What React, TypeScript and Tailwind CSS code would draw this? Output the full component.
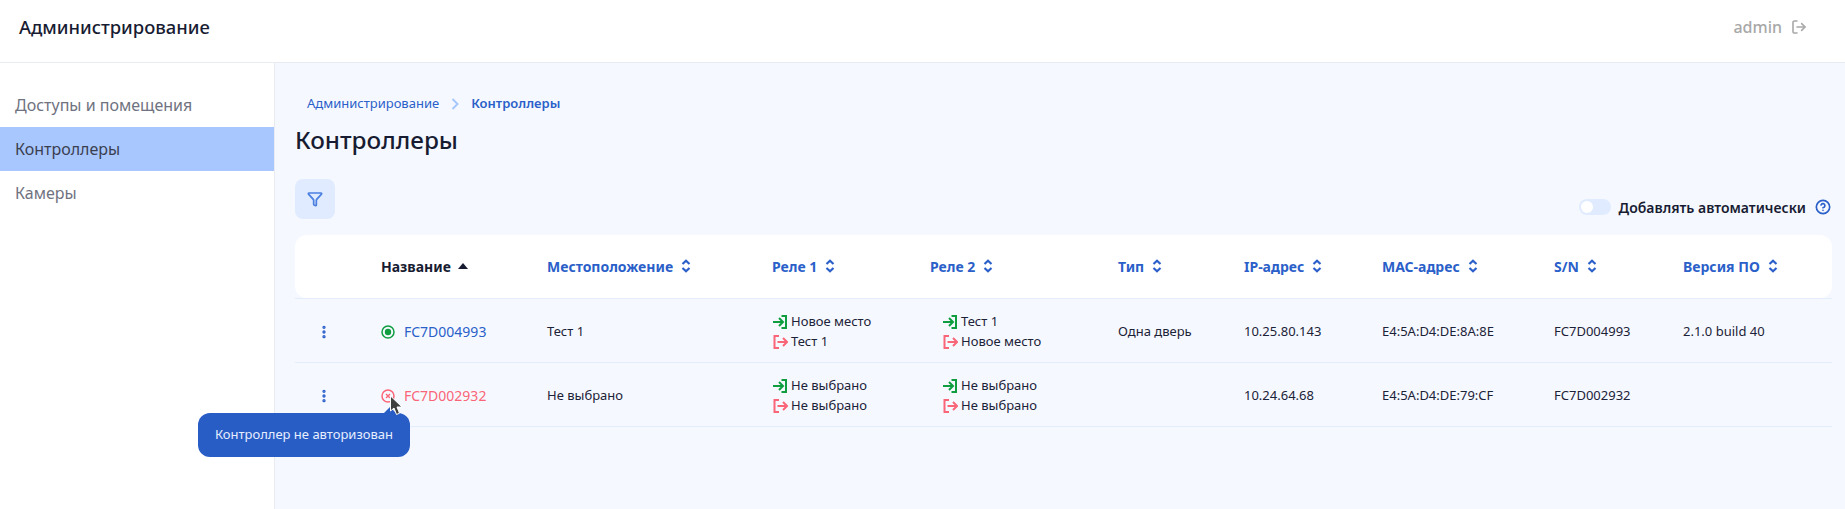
import { CircleHelp, EllipsisVertical, Filter, LogOut } from 'lucide-react';

const FONT = "font-['Noto_Sans',sans-serif]";

function SortIcon() {
  return (
    <svg width="10" height="14" viewBox="0 0 10 14" fill="none" stroke="currentColor" strokeWidth="2.2" className="ml-[8px] shrink-0">
      <path d="M1.5 5 L5 1.8 L8.5 5" />
      <path d="M1.5 9 L5 12.2 L8.5 9" />
    </svg>
  );
}

function HeaderCell({ label }: { label: string }) {
  return (
    <th className="p-0 bg-white text-left text-[14px] font-bold text-[#2b5fc9] last:rounded-tr-xl last:rounded-br-xl">
      <div className="flex items-center">
        {label}
        <SortIcon />
      </div>
    </th>
  );
}

function EnterIcon() {
  return (
    <svg width="16" height="16" viewBox="0 0 16 16" fill="none" stroke="#0f9d3f" strokeWidth="2" className="mr-[3px] shrink-0">
      <path d="M9.5 2 H14 V14 H9.5" />
      <path d="M1 8 H11 M7 4 L11 8 L7 12" />
    </svg>
  );
}

function LeaveIcon() {
  return (
    <svg width="16" height="16" viewBox="0 0 16 16" fill="none" stroke="#fa6577" strokeWidth="2" className="mr-[3px] shrink-0">
      <path d="M7 2 H2.5 V14 H7" />
      <path d="M5.5 8 H15 M11 4 L15 8 L11 12" />
    </svg>
  );
}

function Relay({ enter, leave, indent }: { enter: string; leave: string; indent?: boolean }) {
  return (
    <td>
      <div className={indent ? 'ml-[12px]' : ''}>
        <div className="flex items-center h-5">
          <EnterIcon />
          {enter}
        </div>
        <div className="flex items-center h-5">
          <LeaveIcon />
          {leave}
        </div>
      </div>
    </td>
  );
}

function Row({ children }: { children: React.ReactNode }) {
  return (
    <tr className="h-[64px] border-b border-[#e3edfd] text-[13px] text-[#1c2238] [&>td]:p-0 [&>td]:pt-[3px]">
      {children}
    </tr>
  );
}

function Kebab() {
  return (
    <td>
      <EllipsisVertical size={16} strokeWidth={3} className="ml-[21px] text-[#2b5fc9]" />
    </td>
  );
}

export default function App() {
  return (
    <div className={`${FONT} h-[509px] flex flex-col bg-white overflow-hidden`}>
      <header className="h-[63px] shrink-0 flex items-center justify-between border-b border-[#e8ebf0] pl-[19px] pr-[38px] pb-[9px]">
        <h1 className="text-[18.4px] font-medium text-[#181c32]">Администрирование</h1>
        <div className="flex items-center text-[#a8a8a8] text-[16px] font-medium">
          admin
          <LogOut size={16} strokeWidth={2.4} className="ml-[9px]" />
        </div>
      </header>

      <div className="flex flex-1 min-h-0">
        <aside className="w-[275px] shrink-0 border-r border-[#e8ebf0] pt-[20px] text-[16px] text-[#6f7280]">
          <div className="h-11 flex items-center pl-[15px]">Доступы и помещения</div>
          <div className="h-11 flex items-center pl-[15px] bg-[#a9c7ff] text-[#3a3f50]">Контроллеры</div>
          <div className="h-11 flex items-center pl-[15px]">Камеры</div>
        </aside>

        <main className="flex-1 min-w-0 bg-[#f5f9ff] pl-[20px] pr-[13px]">
          <nav className="flex items-center pl-[12px] pt-[31px] h-[50px] text-[13px] text-[#2b5fc9]">
            Администрирование
            <svg width="8" height="12" viewBox="0 0 8 12" fill="none" stroke="#a9c7ff" strokeWidth="2" className="mx-[12px]">
              <path d="M1.5 1 L6.5 6 L1.5 11" />
            </svg>
            <span className="font-semibold">Контроллеры</span>
          </nav>
          <h2 className="mt-[10px] h-[34px] text-[24.3px] leading-[34px] font-medium text-[#181c32]">Контроллеры</h2>

          <div className="mt-[22px] flex items-end justify-between">
            <button className="w-10 h-10 rounded-lg bg-[#e0ebff] flex items-center justify-center">
              <Filter size={16} strokeWidth={2.6} className="text-[#4b7fe0]" />
            </button>
            <div className="flex items-center h-4 mb-[4px] text-[14px] font-semibold text-[#181c32]">
              <div className="w-8 h-4 rounded-full bg-[#e0ebff] p-[2px] mr-[8px]">
                <div className="w-3 h-3 rounded-full bg-white" />
              </div>
              Добавлять автоматически
              <CircleHelp size={16} strokeWidth={2.5} className="ml-[9px] mr-[1px] text-[#2b5fc9]" />
            </div>
          </div>

          <table className="mt-[16px] w-[1537px] table-fixed border-collapse">
            <colgroup>
              <col className="w-[86px]" />
              <col className="w-[166px]" />
              <col className="w-[225px]" />
              <col className="w-[158px]" />
              <col className="w-[188px]" />
              <col className="w-[126px]" />
              <col className="w-[138px]" />
              <col className="w-[172px]" />
              <col className="w-[129px]" />
              <col className="w-[149px]" />
            </colgroup>
            <thead>
              <tr className="h-[63px] border-b border-[#e3edfd]">
                <th className="p-0 bg-white rounded-tl-xl rounded-bl-xl" />
                <th className="p-0 bg-white text-left text-[14px] font-bold text-[#181c32]">
                  <div className="flex items-center">
                    Название
                    <svg width="10" height="6" viewBox="0 0 10 6" fill="currentColor" className="ml-[7px]">
                      <path d="M5 0 L10 6 H0 Z" />
                    </svg>
                  </div>
                </th>
                {['Местоположение', 'Реле 1', 'Реле 2', 'Тип', 'IP-адрес', 'MAC-адрес', 'S/N', 'Версия ПО'].map((label) => (
                  <HeaderCell key={label} label={label} />
                ))}
              </tr>
            </thead>
            <tbody>
              <Row>
                <Kebab />
                <td>
                  <div className="flex items-center text-[14px] text-[#2b5fc9]">
                    <svg width="14" height="14" viewBox="0 0 14 14" className="mr-[9px]">
                      <circle cx="7" cy="7" r="6" fill="none" stroke="#0f9d3f" strokeWidth="1.5" />
                      <circle cx="7" cy="7" r="3.2" fill="#0f9d3f" />
                    </svg>
                    FC7D004993
                  </div>
                </td>
                <td>Тест 1</td>
                <Relay enter="Новое место" leave="Тест 1" />
                <Relay enter="Тест 1" leave="Новое место" indent />
                <td>Одна дверь</td>
                <td>10.25.80.143</td>
                <td>E4:5A:D4:DE:8A:8E</td>
                <td>FC7D004993</td>
                <td>2.1.0 build 40</td>
              </Row>
              <Row>
                <Kebab />
                <td className="relative">
                  <div className="flex items-center text-[14px] text-[#fa6577]">
                    <svg width="14" height="14" viewBox="0 0 14 14" fill="none" stroke="#fa6577" className="mr-[9px]">
                      <circle cx="7" cy="7" r="6" strokeWidth="1.5" />
                      <path d="M5 5 L9 9 M9 5 L5 9" strokeWidth="1.4" />
                    </svg>
                    FC7D002932
                  </div>
                  {/* tooltip + mouse pointer sit over the table */}
                  <div className="absolute left-[-183px] top-[50px] w-[212px] h-[44px] rounded-xl bg-[#285dc5] flex items-center justify-center text-[13px] text-[#e6eeff] z-10">
                    Контроллер не авторизован
                  </div>
                  <div className="absolute left-[3px] top-[44px] w-0 h-0 border-x-[6px] border-x-transparent border-b-[6px] border-b-[#285dc5] z-10" />
                  <svg width="16" height="22" viewBox="0 0 16 22" className="absolute left-[8px] top-[32px] z-20">
                    <path d="M1.5 1 V16 L5 13 L7.5 19.5 L10.5 18.2 L8 12 H13 Z" fill="#3f3f3f" stroke="#ffffff" strokeWidth="1" />
                  </svg>
                </td>
                <td>Не выбрано</td>
                <Relay enter="Не выбрано" leave="Не выбрано" />
                <Relay enter="Не выбрано" leave="Не выбрано" indent />
                <td />
                <td>10.24.64.68</td>
                <td>E4:5A:D4:DE:79:CF</td>
                <td>FC7D002932</td>
                <td />
              </Row>
            </tbody>
          </table>
        </main>
      </div>
    </div>
  );
}
